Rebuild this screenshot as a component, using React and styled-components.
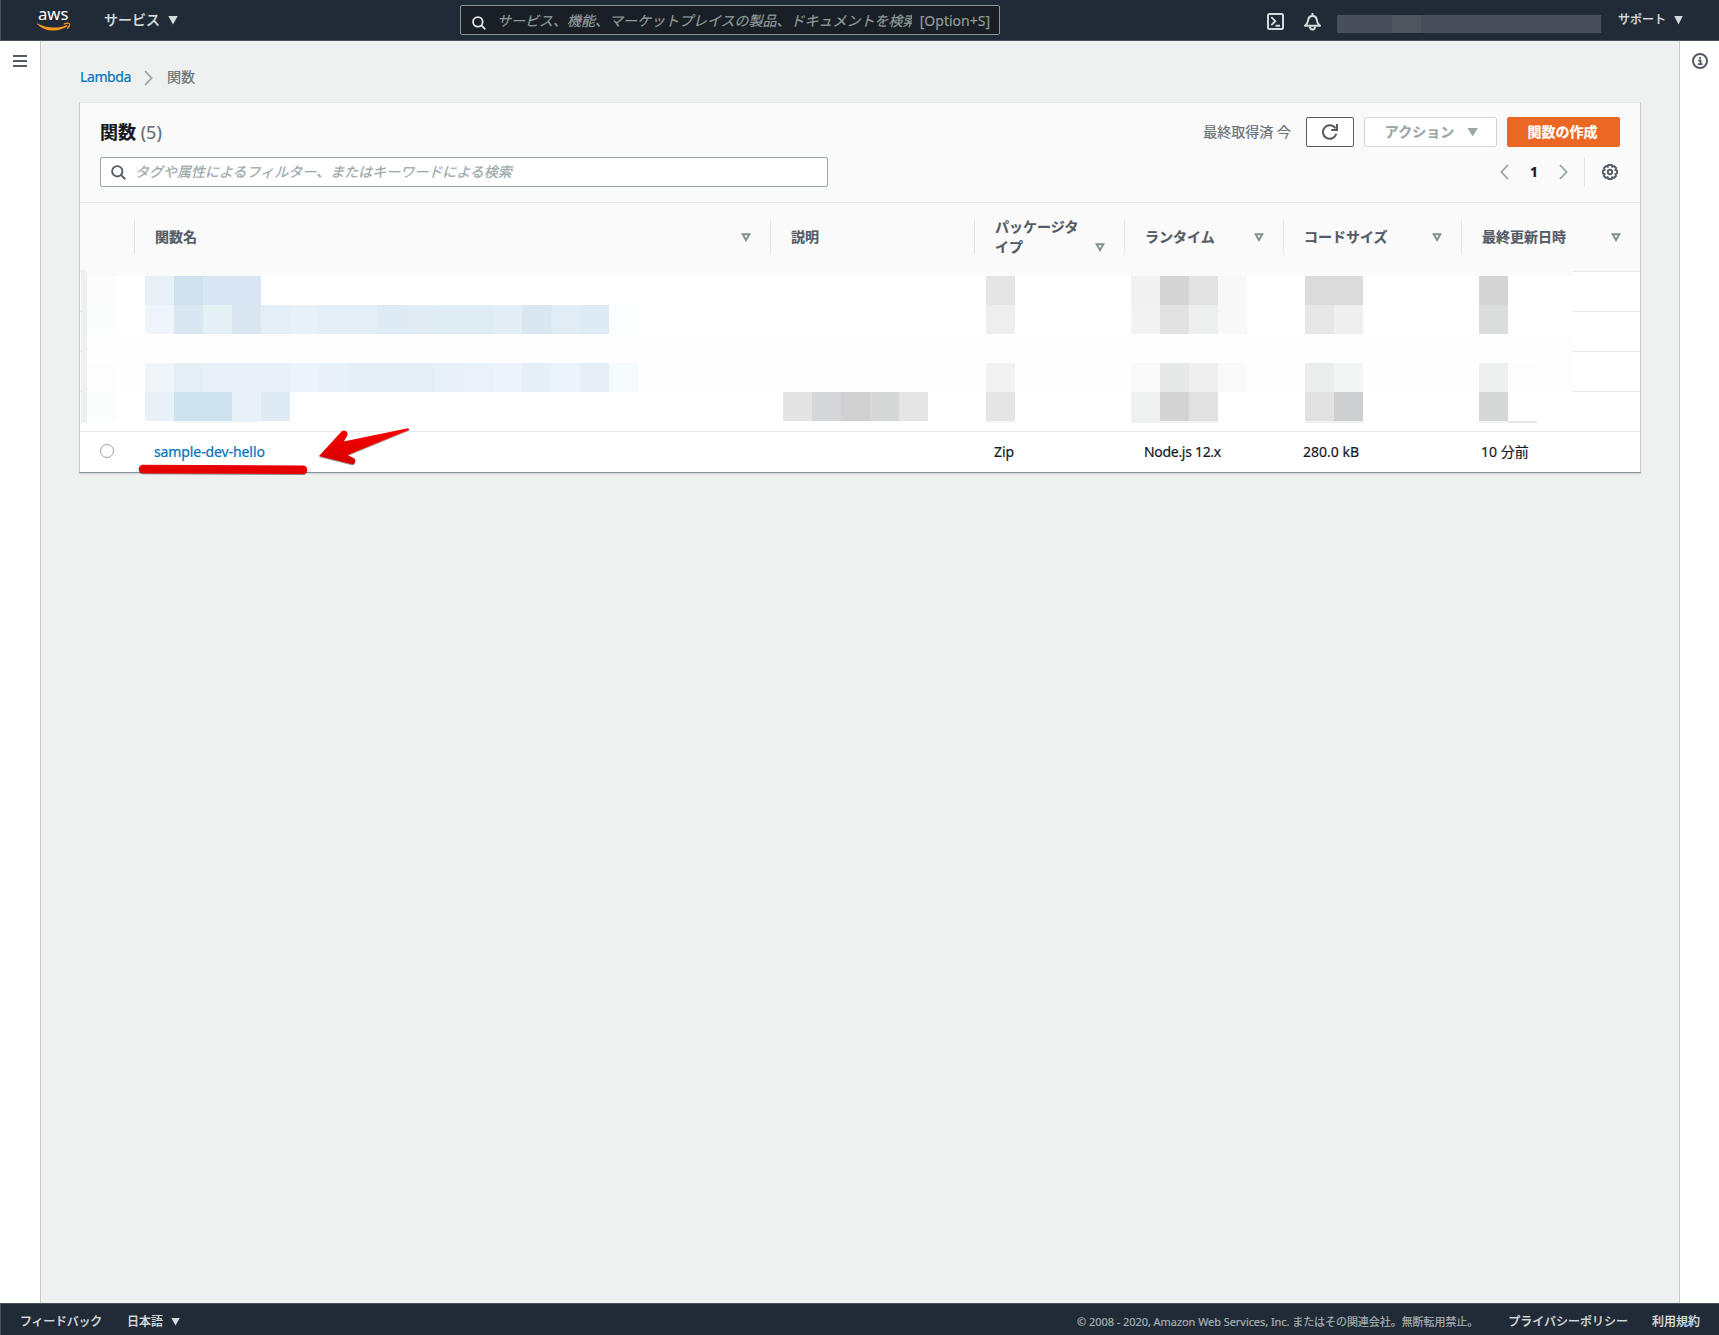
import React from "react";
import styled, { createGlobalStyle } from "styled-components";

const GlobalStyle = createGlobalStyle`
  *, *::before, *::after { box-sizing: border-box; }
  body {
    margin: 0;
    background: #eff1f1;
    font-family: "Noto Sans", "Noto Sans CJK JP", sans-serif;
    font-size: 14px;
    line-height: 20px;
    color: #16191f;
    -webkit-font-smoothing: antialiased;
    -webkit-text-stroke: 0.2px;
  }
`;

const Page = styled.div`
  display: flex;
  flex-direction: column;
  width: 1719px;
  height: 1335px;
  overflow: hidden;
`;

/* ---------- top navigation ---------- */

const TopNav = styled.header`
  display: flex;
  align-items: center;
  flex: none;
  height: 41px;
  padding-left: 36px;
  background: #212b37;
  border-bottom: 1px solid #49515c;
  border-left: 1px solid #49515c;
  color: #d5dbdb;
`;

const Logo = styled.svg`
  flex: none;
  width: 34px;
  height: 21px;
  overflow: visible;
`;

const NavMenu = styled.div`
  display: flex;
  align-items: center;
  flex: none;
  gap: ${(p) => p.$gap}px;
  margin-left: ${(p) => p.$left}px;
  font-size: ${(p) => p.$size}px;
  font-weight: 500;
  white-space: nowrap;
`;

const Caret = styled.span`
  flex: none;
  width: ${(p) => p.$w}px;
  height: ${(p) => p.$h}px;
  background: currentColor;
  clip-path: polygon(0 0, 100% 0, 50% 100%);
`;

const GlobalSearch = styled.div`
  display: flex;
  align-items: center;
  flex: none;
  width: 540px;
  height: 30px;
  margin-left: 282px;
  padding: 2px 9px 0 11px;
  background: #1a1f26;
  border: 1px solid #879596;
  border-radius: 2px;
  color: #8d9b9b;
`;

const GlobalPlaceholder = styled.span`
  width: 415px;
  margin-left: 11px;
  overflow: hidden;
  white-space: nowrap;
  font-style: italic;
`;

const Shortcut = styled.span`
  margin-left: auto;
  white-space: nowrap;
`;

const Icon = styled.svg`
  display: block;
  flex: none;
  width: ${(p) => p.$w || 16}px;
  height: ${(p) => p.$h || p.$w || 16}px;
  margin-top: ${(p) => p.$top || 0}px;
  fill: none;
  stroke: currentColor;
  stroke-width: 2;
  color: ${(p) => p.$color || "inherit"};
`;

const NavIcons = styled.div`
  display: flex;
  align-items: center;
  gap: 20px;
  margin: 3px 0 0 267px;
`;

const Account = styled.div`
  display: flex;
  flex: none;
  width: 264px;
  height: 18px;
  margin: 8px 0 0 16px;
  background: #474f5a;
`;

const AccountTint = styled.span`
  width: 29px;
  margin-left: ${(p) => p.$left}px;
  background: ${(p) => p.$color};
`;

/* ---------- page frame ---------- */

const Body = styled.div`
  display: flex;
  flex: 1;
  min-height: 0;
`;

const Rail = styled.aside`
  display: flex;
  justify-content: center;
  flex: none;
  width: ${(p) => (p.$side === "left" ? 41 : 40)}px;
  padding: ${(p) => (p.$side === "left" ? "14px 0 0" : "12px 0 0 1px")};
  background: #fff;
  border-${(p) => (p.$side === "left" ? "right" : "left")}: 1px solid #c4cbcb;
  color: #545b64;
`;

const Burger = styled.div`
  display: flex;
  flex-direction: column;
  justify-content: space-between;
  width: 14px;
  height: 12px;
  i { height: 2px; background: #545b64; }
`;

const Main = styled.main`
  flex: 1;
  padding: 26px 38px 0 38px;
  background: #eff1f1;
`;

const Breadcrumb = styled.nav`
  display: flex;
  align-items: center;
  height: 20px;
  margin-left: 1px;
  color: #687078;
  a { color: #0073bb; letter-spacing: -0.4px; }
  svg { margin: 1px 14px 0 13px; }
`;

const Card = styled.section`
  position: relative;
  margin-top: 15px;
  height: 371px;
  background: #fff;
  border: 1px solid #c8cfcf;
  border-top-color: #e3e8e8;
  border-bottom-color: #879596;
  box-shadow: 0 1px 1px rgba(0, 28, 36, 0.12);
`;

const CardHeader = styled.div`
  height: 100px;
  padding: 14px 20px 0;
  background: #fafafa;
  border-bottom: 1px solid #e7e9e9;
`;

const HeaderLine = styled.div`
  display: flex;
  align-items: center;
  height: 30px;
  margin-bottom: 10px;
`;

const Title = styled.h1`
  margin: 0 auto 0 0;
  font-size: 18px;
  line-height: 22px;
  font-weight: 700;
  span { font-weight: 400; color: #687078; }
`;

const Fetched = styled.span`
  margin-right: 15px;
  color: #687078;
`;

const Button = styled.button`
  display: flex;
  align-items: center;
  justify-content: center;
  gap: 13px;
  width: ${(p) => p.$width}px;
  height: 30px;
  margin: 0 0 0 ${(p) => p.$left || 0}px;
  padding: 0 ${(p) => (p.$nudge < 0 ? 2 : 0)}px 0 ${(p) => (p.$nudge > 0 ? 2 : 0)}px;
  font: inherit;
  font-weight: 700;
  white-space: nowrap;
  border-radius: 2px;
  color: ${(p) => p.$color};
  background: ${(p) => p.$bg || "#fff"};
  border: 1px solid ${(p) => p.$border};
`;

const Filter = styled.div`
  display: flex;
  align-items: center;
  gap: 9px;
  width: 728px;
  height: 30px;
  padding-left: 10px;
  background: #fff;
  border: 1px solid #98a7a7;
  border-radius: 2px;
  color: #9aa8a8;
  font-style: italic;
`;

const Pager = styled.div`
  display: flex;
  align-items: center;
  height: 30px;
  margin-left: auto;
  color: #98a5a5;
  b { width: 50px; text-align: center; color: #16191f; }
`;

const Settings = styled.div`
  display: flex;
  align-items: center;
  height: 30px;
  margin: 0 2px 0 16px;
  padding-left: 17px;
  border-left: 1px solid #e2e6e6;
`;

/* ---------- table ---------- */

const columnTracks = "55px 636px 204px 150px 159px 178px 1fr";

const HeadRow = styled.div`
  display: grid;
  grid-template-columns: ${columnTracks};
  align-items: center;
  height: 69px;
  background: #fafafa;
  border-bottom: 1px solid #e7e9e9;
`;

const HeadCell = styled.div`
  display: flex;
  align-items: flex-end;
  justify-content: space-between;
  height: 34px;
  padding: ${(p) => (p.$double ? 0 : 7)}px 19px ${(p) => (p.$double ? 0 : 7)}px 20px;
  font-weight: 700;
  color: #545b64;
  border-right: ${(p) => (p.$last ? "0" : "1px")} solid #e2e6e6;
  span { width: ${(p) => (p.$double ? "86px" : "auto")}; margin: ${(p) => (p.$double ? "-3px 0" : "0")}; }
  svg { margin-bottom: ${(p) => (p.$double ? "2px" : "5px")}; }
`;

const Row = styled.div`
  display: grid;
  grid-template-columns: ${columnTracks};
  align-items: center;
  height: 40px;
  border-bottom: ${(p) => (p.$last ? "0" : "1px")} solid #e5e8e8;
`;

const Cell = styled.div`
  padding: 0 20px 0 19px;
  letter-spacing: ${(p) => p.$track || 0}px;
  color: ${(p) => (p.$link ? "#0073bb" : "#16191f")};
`;

const Radio = styled.span`
  display: block;
  width: 14px;
  height: 14px;
  margin: 0 0 2px 20px;
  border: 1px solid #95a5a6;
  border-radius: 50%;
  background: #fff;
`;

/* Redaction blocks that sit over the first four rows */
const Mosaic = styled.div`
  position: absolute;
  left: 1px;
  top: 167px;
  width: 1492px;
  height: 153px;
  overflow: hidden;
  padding-left: 6px;
  background: linear-gradient(to right, #eff1f1 6px, #fefefe 6px);
`;

const MosaicRow = styled.div`
  display: flex;
  height: ${(p) => p.$h}px;
  background: ${(p) => p.$bg};
`;

const Block = styled.i`
  flex: none;
  width: ${(p) => p.$n * 29}px;
  background: ${(p) => p.$c};
`;

const Annotation = styled.svg`
  position: absolute;
  left: 50px;
  top: 320px;
  width: 290px;
  height: 60px;
`;

/* ---------- footer ---------- */

const Footer = styled.footer`
  display: flex;
  align-items: center;
  flex: none;
  height: 32px;
  padding: 4px 19px 0 19px;
  background: #212b37;
  border-top: 1px solid #49515c;
  border-left: 1px solid #49515c;
  color: #d5dbdb;
  font-size: 12px;
  font-weight: 500;
  white-space: nowrap;
`;

const Feedback = styled.span`
  letter-spacing: -0.25px;
`;

const Language = styled.div`
  display: flex;
  align-items: center;
  gap: 8px;
  margin-left: 25px;
`;

const Copyright = styled.span`
  margin-left: auto;
  font-size: 11px;
  font-weight: 400;
  letter-spacing: -0.06px;
  color: #a5b0b0;
`;

const FooterLink = styled.span`
  margin-left: ${(p) => p.$left}px;
`;

const t = "transparent";

const mosaicRows = [
  { h: 6, bg: "#f9fbfa", blocks: [] },
  {
    h: 29, bg: "#fff",
    blocks: [[1, "#fdfcfc"], [1, t], [1, "#e8f0f7"], [1, "#cfe1ef"], [2, "#d7e6f2"], [25, t], [1, "#e5e5e5"], [4, t],
      [1, "#f1f1f1"], [1, "#d4d4d4"], [1, "#e3e3e3"], [1, "#f8f8f8"], [2, t], [2, "#dbdbdb"], [4, t], [1, "#d5d5d5"]],
  },
  {
    h: 29, bg: "#fff",
    blocks: [[1, "#fbfdfc"], [1, t], [1, "#f0f5fc"], [1, "#dae7f3"], [1, "#e4f0f4"], [1, "#dae7f3"], [1, "#e4eff8"],
      [1, "#e8f0f8"], [2, "#e3eef6"], [1, "#deebf4"], [1, "#e1ebf4"], [2, "#deecf4"], [1, "#e3edf6"], [1, "#d9e7f2"],
      [1, "#e2ecf5"], [1, "#deebf5"], [1, "#fbfdff"], [12, t], [1, "#eeeeee"], [4, t], [1, "#f3f3f3"], [1, "#e2e2e2"],
      [1, "#ecefee"], [1, "#f8f8f8"], [2, t], [1, "#e7e7e7"], [1, "#efefef"], [4, t], [1, "#dbdddc"]],
  },
  { h: 29, bg: "#fefefe", blocks: [] },
  {
    h: 29, bg: "#fefefe",
    blocks: [[1, "#fdfdfd"], [1, t], [1, "#eff5f9"], [1, "#e4eff4"], [3, "#e7f0f8"], [1, "#ebf3fb"], [1, "#e8f1f8"],
      [1, "#e3eff4"], [2, "#e4eff5"], [1, "#e7f0f7"], [1, "#e9f1f9"], [1, "#ecf3fb"], [1, "#e4f0f5"], [1, "#ebf3fb"],
      [1, "#e6eff7"], [1, "#f5fafd"], [12, t], [1, "#f2f2f2"], [4, t], [1, "#f9f9f9"], [1, "#e6e9e7"], [1, "#efefef"],
      [1, "#f9f9f9"], [2, t], [1, "#eaedec"], [1, "#f3f6f5"], [4, t], [1, "#eef0ef"], [1, "#fdfdfd"]],
  },
  {
    h: 29, bg: "#fff",
    blocks: [[1, "#fbfdfc"], [1, t], [1, "#e8f0f8"], [2, "#cfe2f0"], [1, "#e7eff7"], [1, "#deebf5"], [17, t],
      [1, "#e4e4e4"], [1, "#d4d6d9"], [1, "#d0d0d0"], [1, "#d5d8d6"], [1, "#e5e5e5"], [2, t], [1, "#e5e5e5"], [4, t],
      [1, "#eef1f0"], [1, "#d3d3d3"], [1, "#e1e1e1"], [3, t], [1, "#e1e1e1"], [1, "#cdcfd1"], [4, t], [1, "#d5d8d6"]],
  },
  {
    h: 2, bg: "#fefefe",
    blocks: [[3, t], [3, "#f3f8fc"], [25, t], [1, "#f7f7f7"], [4, t], [3, "#f3f3f3"], [3, t], [2, "#f0f0f0"], [4, t],
      [1, "#f1f1f1"], [1, "#e5e5e5"]],
  },
];

const headings = [
  { label: "関数名", sort: true },
  { label: "説明" },
  { label: "パッケージタイプ", sort: true, double: true },
  { label: "ランタイム", sort: true },
  { label: "コードサイズ", sort: true },
  { label: "最終更新日時", sort: true },
];

const MagnifierIcon = ({ color, w, top }) => (
  <Icon viewBox="0 0 16 16" $w={w} $color={color} $top={top}>
    <circle cx="6.7" cy="6.7" r="5.5" />
    <path d="M10.8 10.8 15.2 15.2" />
  </Icon>
);

const SortIcon = () => (
  <Icon viewBox="0 0 10 9" $w={10} $h={9} $color="#7f8f8f">
    <path d="M1.6 1.2h6.8L5 7z" strokeWidth="1.9" />
  </Icon>
);

const Chevron = ({ left }) => (
  <Icon viewBox="0 0 9 16" $w={9} $h={16} $color="#98a5a5">
    <path d={left ? "M8 1 1.4 8 8 15" : "M1 1 7.6 8 1 15"} strokeWidth="1.8" />
  </Icon>
);

export default function App() {
  return (
    <Page>
      <GlobalStyle />
      <TopNav>
        <Logo viewBox="0 0 34 21">
          <text x="1" y="10" fontFamily="Noto Sans, sans-serif" fontSize="17" fontWeight="400" fill="#fff" stroke="none" textLength="30.5" lengthAdjust="spacingAndGlyphs">aws</text>
          <path d="M0 13.200C8 17.900 20 19.200 30 15L30.600 16.300C22 22.200 8 22.200 0 13.900z" fill="#f7981f" />
          <path d="M27.300 13.900c2.200-.9 4.500-.9 5-.3s-.1 2.800-1.700 4.700" fill="none" stroke="#f7981f" strokeWidth="1.300" strokeLinecap="round" />
        </Logo>
        <NavMenu $gap={8} $left={33} $size={14}>
          サービス<Caret $w={10} $h={9} />
        </NavMenu>
        <GlobalSearch>
          <MagnifierIcon color="#e3e8e8" w={14} top={3} />
          <GlobalPlaceholder>サービス、機能、マーケットプレイスの製品、ドキュメントを検索</GlobalPlaceholder>
          <Shortcut>[Option+S]</Shortcut>
        </GlobalSearch>
        <NavIcons>
          <Icon viewBox="0 0 17 17" $w={17}>
            <rect x="1" y="1" width="15" height="15" rx="1.500" />
            <path d="M4.300 4.200 8.300 8.200 4.300 12.200M8.500 12.700h4.500" strokeWidth="1.900" />
          </Icon>
          <Icon viewBox="0 0 17 18" $w={17} $h={18}>
            <path d="M1 12.800h15c-2-1.800-2.900-3-3.100-5.300C12.700 4.500 11.300 3 8.500 3S4.300 4.500 4.100 7.500C3.900 9.800 3 11 1 12.800z" strokeLinejoin="round" />
            <path d="M8.500 0v3M6 13.500c0 4 5 4 5 0" />
          </Icon>
        </NavIcons>
        <Account>
          <AccountTint $left={55} $color="#4d555f" />
        </Account>
        <NavMenu $gap={8} $left={17} $size={12}>
          サポート<Caret $w={9} $h={9} />
        </NavMenu>
      </TopNav>

      <Body>
        <Rail $side="left">
          <Burger><i /><i /><i /></Burger>
        </Rail>
        <Main>
          <Breadcrumb>
            <a>Lambda</a>
            <Chevron />
            <span>関数</span>
          </Breadcrumb>
          <Card>
            <CardHeader>
              <HeaderLine>
                <Title>関数 <span>(5)</span></Title>
                <Fetched>最終取得済 今</Fetched>
                <Button $width={48} $color="#545b64" $border="#545b64">
                  <Icon viewBox="0 0 16 16" $w={16}>
                    <path d="M14.300 9.800A6.800 6.800 0 1 1 13.500 4.400" />
                    <path d="M15 0v6H9.300" />
                  </Icon>
                </Button>
                <Button $width={133} $left={10} $nudge={1} $color="#9aa8a8" $border="#d0d7d7">
                  アクション<Caret $w={11} $h={9} />
                </Button>
                <Button $width={113} $left={10} $nudge={-1} $color="#fff" $bg="#eb6724" $border="#eb6724">
                  関数の作成
                </Button>
              </HeaderLine>
              <HeaderLine>
                <Filter>
                  <MagnifierIcon color="#545b64" w={15} />
                  タグや属性によるフィルター、またはキーワードによる検索
                </Filter>
                <Pager>
                  <Chevron left />
                  <b>1</b>
                  <Chevron />
                  <Settings>
                    <Icon viewBox="0 0 16 16" $w={16} $color="#545b64">
                      <path d="M6.300 1h3.400l.6 1.700 1.800-.6 2 2-.7 1.900L15 6.500v3l-1.600.7.6 1.700-2 2-1.800-.6L9.600 15H6.400l-.7-1.700-1.800.6-2-2 .7-1.800L1 9.500v-3L2.600 6 2 4.100l2-2 1.800.6z" strokeWidth="1.900" />
                      <circle cx="8" cy="8" r="2.200" strokeWidth="1.900" />
                    </Icon>
                  </Settings>
                </Pager>
              </HeaderLine>
            </CardHeader>

            <HeadRow>
              <HeadCell />
              {headings.map((h, i) => (
                <HeadCell key={h.label} $double={h.double} $last={i === headings.length - 1}>
                  <span>{h.label}</span>
                  {h.sort && <SortIcon />}
                </HeadCell>
              ))}
            </HeadRow>
            <Row /><Row /><Row /><Row />
            <Row $last>
              <Radio />
              <Cell $link $track={-0.1}>sample-dev-hello</Cell>
              <Cell />
              <Cell>Zip</Cell>
              <Cell $track={-0.3}>Node.js 12.x</Cell>
              <Cell>280.0 kB</Cell>
              <Cell>10 分前</Cell>
            </Row>

            <Mosaic>
              {mosaicRows.map((row, i) => (
                <MosaicRow key={i} $h={row.h} $bg={row.bg}>
                  {row.blocks.map(([n, c], j) => <Block key={j} $n={n} $c={c} />)}
                </MosaicRow>
              ))}
            </Mosaic>

            <Annotation viewBox="130 423 290 60">
              <defs>
                <linearGradient id="red" x1="0" y1="0" x2="0" y2="1">
                  <stop offset="0" stopColor="#fb0000" />
                  <stop offset="1" stopColor="#d30000" />
                </linearGradient>
                <filter id="drop" filterUnits="userSpaceOnUse" x="130" y="423" width="290" height="60">
                  <feDropShadow dx="0" dy="1" stdDeviation="0.600" floodColor="#000" floodOpacity="0.450" />
                </filter>
              </defs>
              <path filter="url(#drop)" d="M143 469 303 469.800" stroke="#e60000" strokeWidth="8.500" strokeLinecap="round" />
              <path filter="url(#drop)" fill="url(#red)" d="M319 456 341.500 431.500Q344 429.500 346.500 431.500 348.500 433.500 346.500 436.500L343.500 441.500 408 428.300 409.500 429.500 347.500 455 353.500 458Q356 459.500 355 462.300 354 465 351 464z" />
            </Annotation>
          </Card>
        </Main>
        <Rail $side="right">
          <Icon viewBox="0 0 16 16" $w={16}>
            <circle cx="8" cy="8" r="7" />
            <path d="M6.300 7.500h2.200V11M5.900 11.200h4.600M7 4.900h2" strokeWidth="1.800" />
          </Icon>
        </Rail>
      </Body>

      <Footer>
        <Feedback>フィードバック</Feedback>
        <Language>日本語<Caret $w={9} $h={8} /></Language>
        <Copyright>© 2008 - 2020, Amazon Web Services, Inc. またはその関連会社。無断転用禁止。</Copyright>
        <FooterLink $left={30}>プライバシーポリシー</FooterLink>
        <FooterLink $left={24}>利用規約</FooterLink>
      </Footer>
    </Page>
  );
}
